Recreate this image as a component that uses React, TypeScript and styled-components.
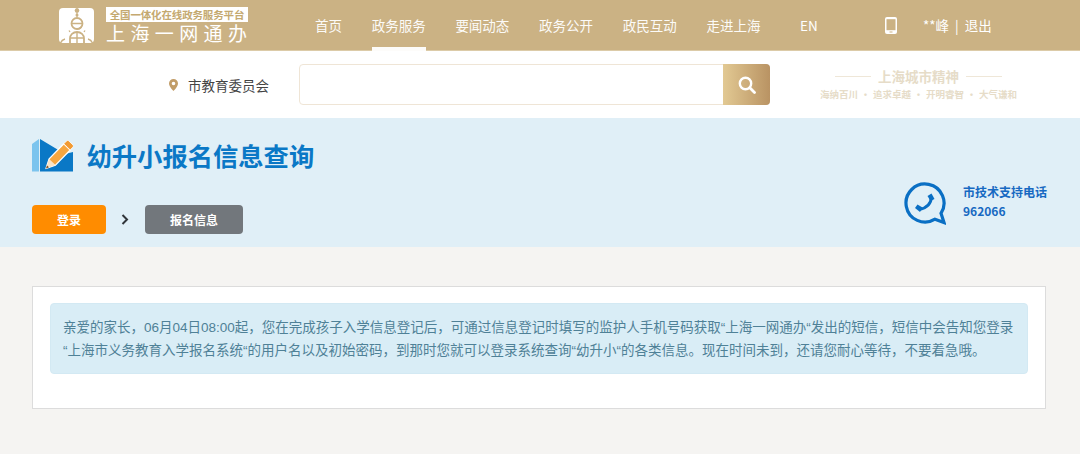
import React from "react";
import styled, { createGlobalStyle } from "styled-components";

const Global = createGlobalStyle`
  html, body { margin: 0; padding: 0; background: #f5f4f2; }
  body { font-family: "Noto Sans CJK SC", "Noto Sans", sans-serif; }
  * { box-sizing: border-box; }
`;

const Page = styled.div`
  width: 1080px;
  height: 454px;
  overflow: hidden;
  background: #f5f4f2;
`;

const Header = styled.header`
  height: 50px;
  background: #cbb284;
  display: flex;
  align-items: center;
  padding-left: 59px;
  border-bottom: 1px solid #dccba8;
  box-sizing: content-box;
`;

const Logo = styled.div`
  display: flex;
  align-items: center;
  gap: 12px;
  width: 256px;
`;

const LogoText = styled.div`
  display: flex;
  flex-direction: column;
  width: 142px;
`;

const Tagline = styled.div`
  height: 15px;
  background: #fff;
  color: #c4a970;
  font-size: 10.5px;
  font-weight: 700;
  line-height: 15px;
  text-align: center;
  white-space: nowrap;
  letter-spacing: -0.15px;
`;

const Brand = styled.div`
  margin-top: 1px;
  color: #fff;
  font-size: 19px;
  line-height: 20px;
  letter-spacing: 5.4px;
  white-space: nowrap;
`;

const Nav = styled.nav`
  display: flex;
  align-self: stretch;
  gap: 29.7px;
`;

const NavItem = styled.a<{ $active?: boolean }>`
  position: relative;
  color: #fff;
  font-size: 13.5px;
  line-height: 50px;
  white-space: nowrap;
  opacity: 0.95;
  ${(p) =>
    p.$active &&
    `&::after { content: ""; position: absolute; left: 0; right: 0; bottom: -1px; height: 4px; background: #fff; }`}
`;

const Lang = styled.span`
  margin-left: 39.5px;
  color: #fff;
  font-size: 13.5px;
  width: 18px;
`;

const Device = styled.span`
  display: flex;
  margin-left: 67px;
`;

const User = styled.span`
  margin-left: 26px;
  color: #fff;
  font-size: 13.5px;
  white-space: pre;
`;

const SearchRow = styled.div`
  height: 67px;
  background: #fff;
  display: flex;
  align-items: center;
  padding-left: 169px;
`;

const Place = styled.div`
  display: flex;
  align-items: center;
  gap: 10px;
  width: 130px;
  color: #444;
  font-size: 13.5px;
`;

const SearchBox = styled.div`
  width: 471px;
  height: 41px;
  display: flex;
  border: 1px solid #efe5d6;
  border-radius: 4px;
  background: #fff;
`;

const SearchInput = styled.div`
  flex: 1;
`;

const SearchButton = styled.div`
  width: 47px;
  height: 41px;
  margin: -1px -1px 0 0;
  border-radius: 0 4px 4px 0;
  background: linear-gradient(90deg, #e2c993, #b99363);
  display: flex;
  align-items: center;
  justify-content: center;
`;

const Spirit = styled.div`
  margin-left: 50px;
  width: 197px;
  color: #e6dcc8;
  display: flex;
  flex-direction: column;
  align-items: center;
`;

const SpiritTitle = styled.div`
  display: flex;
  align-items: center;
  gap: 7px;
  font-size: 13.5px;
  font-weight: 700;
  line-height: 20px;
  &::before, &::after {
    content: "";
    width: 36px;
    height: 1px;
    background: #efe7d8;
  }
`;

const SpiritSub = styled.div`
  font-size: 9.5px;
  font-weight: 700;
  line-height: 17px;
  word-spacing: 0.6px;
  white-space: nowrap;
`;

const Banner = styled.section`
  height: 129px;
  background: #e0eff7;
  display: flex;
  justify-content: space-between;
  padding: 19px 33px 0 32px;
`;

const BannerLeft = styled.div`
  display: flex;
  flex-direction: column;
`;

const TitleRow = styled.div`
  display: flex;
  align-items: center;
  gap: 14px;
  height: 36px;
`;

const Title = styled.h1`
  margin: -1px 0 0 -0.5px;
  color: #0a78c6;
  font-size: 25.3px;
  font-weight: 700;
  line-height: 36px;
  white-space: nowrap;
`;

const Steps = styled.div`
  display: flex;
  align-items: center;
  margin-top: 32px;
`;

const Step = styled.div<{ $bg: string; $w: number }>`
  width: ${(p) => p.$w}px;
  height: 29px;
  border-radius: 4px;
  background: ${(p) => p.$bg};
  color: #fff;
  font-size: 12px;
  font-weight: 700;
  line-height: 29px;
  text-align: center;
`;

const Arrow = styled.span`
  display: flex;
  justify-content: center;
  width: 38px;
  margin-right: 1px;
`;

const Support = styled.div`
  display: flex;
  align-items: flex-start;
  gap: 17px;
  margin-top: 44px;
`;

const SupportText = styled.div`
  color: #1769c2;
  font-size: 12px;
  font-weight: 700;
  line-height: 19px;
  white-space: nowrap;
  padding-top: 1px;
`;

const Main = styled.main`
  padding: 39px 34px 0 32px;
`;

const Card = styled.div`
  height: 123px;
  background: #fff;
  border: 1px solid #dcdcdc;
  padding: 16px 17px;
`;

const Alert = styled.div`
  height: 71px;
  background: #d9edf6;
  border: 1px solid #d3e9f3;
  border-radius: 4px;
  padding: 12px 12px;
  color: #4f8197;
  font-family: "Liberation Sans", "Noto Sans CJK SC", sans-serif;
  font-size: 13.5px;
  line-height: 23px;
  white-space: nowrap;
`;

const LogoIcon = () => (
  <svg width="35" height="35" viewBox="0 0 35 35">
    <rect width="35" height="35" rx="4" fill="#fff" />
    <g fill="none" stroke="#cbb284">
      <path d="M18 0v9" strokeWidth="1.2" />
      <circle cx="18" cy="15.500" r="5.500" strokeWidth="1.800" />
      <path d="M13 15.500h10M22.500 19c-1 1.500-2.800 2-4.500 2" strokeWidth="1.500" />
      <path d="M11 24l-1-1.500M25 24l1-1.500" strokeWidth="1.300" />
      <path d="M11 35v-4.500c0-3.800 3-6.500 7-6.500s7 2.700 7 6.500V35" strokeWidth="1.800" />
      <path d="M18 24v11M11 30h14" strokeWidth="1.400" />
      <path d="M1.500 35c.8-2 2.500-3.500 4.500-4M33.500 35c-.8-2-2.500-3.500-4.500-4" strokeWidth="1.400" />
    </g>
    <circle cx="18" cy="2.500" r="2.300" fill="#cbb284" />
    <circle cx="18" cy="7" r="1.500" fill="#cbb284" />
  </svg>
);

const PhoneIcon = () => (
  <svg width="12" height="17" viewBox="0 0 12 17">
    <rect x="0" y="0" width="12" height="17" rx="2" fill="#fff" />
    <rect x="1.500" y="2.200" width="9" height="11" fill="#cbb284" />
    <rect x="4.500" y="14.500" width="3" height="1" fill="#cbb284" />
  </svg>
);

const PinIcon = () => (
  <svg width="9" height="12" viewBox="0 0 9 12">
    <path
      fillRule="evenodd"
      d="M4.500 0A4.500 4.500 0 0 0 0 4.500C0 7.500 4.500 12 4.500 12S9 7.500 9 4.500A4.500 4.500 0 0 0 4.500 0Zm0 2.700a1.800 1.800 0 1 1 0 3.600 1.800 1.800 0 0 1 0-3.600Z"
      fill="#c29d68"
    />
  </svg>
);

const SearchIcon = () => (
  <svg width="18" height="18" viewBox="0 0 18 18">
    <circle cx="7.500" cy="7.500" r="5.700" fill="none" stroke="#fff" strokeWidth="2.400" />
    <path d="M11.800 11.800L16.500 16.500" stroke="#fff" strokeWidth="2.800" strokeLinecap="round" />
  </svg>
);

const FormIcon = () => (
  <svg width="41" height="33" viewBox="0 0 41 33">
    <path d="M0 5L7 0V32.500H0Z" fill="#7cc4ee" />
    <path d="M8 0L33 15L41 13V32.500H8Z" fill="#0a78c6" />
    <path d="M14 29.500L17.100 19.900L31.800 4.800L38.200 11L23.500 26.100Z" fill="#f7a63f" stroke="#fff" strokeWidth="1.300" strokeLinejoin="round" />
    <path d="M14 29.500L17.100 19.900L23.500 26.100Z" fill="#fbe4c6" />
    <path d="M14 29.500L15 26.400L17 28.300Z" fill="#7a4a20" />
    <path d="M31.800 4.800L34.600 1.900C35.200 1.300 36.200 1.300 36.800 1.900L41 6C41.500 6.600 41.500 7.500 41 8.100L38.200 11Z" fill="#f29a33" stroke="#fff" strokeWidth="0.800" />
  </svg>
);

const ChevronIcon = () => (
  <svg width="8" height="11" viewBox="0 0 8 11">
    <path d="M1.500 1L6 5.500L1.500 10" fill="none" stroke="#30353a" strokeWidth="2" />
  </svg>
);

const ChatPhoneIcon = () => (
  <svg width="42" height="44" viewBox="0 0 42 44">
    <path
      d="M31 38.200A19 19 0 1 1 37 32.300L40 41.500Z"
      fill="none"
      stroke="#0a6fc4"
      strokeWidth="3.200"
      strokeLinejoin="miter"
    />
    <path d="M27.500 15.500Q27 26 15.500 28.500" fill="none" stroke="#0a6fc4" strokeWidth="3" />
    <path d="M23.500 15L27.500 12.500L30.500 18L26.500 20Z" fill="#0a6fc4" />
    <path d="M11 27L13.500 23.500L18.500 26.500L16 31Z" fill="#0a6fc4" />
  </svg>
);

const navItems = ["首页", "政务服务", "要闻动态", "政务公开", "政民互动", "走进上海"];

export default function App() {
  return (
    <Page>
      <Global />
      <Header>
        <Logo>
          <LogoIcon />
          <LogoText>
            <Tagline>全国一体化在线政务服务平台</Tagline>
            <Brand>上海一网通办</Brand>
          </LogoText>
        </Logo>
        <Nav>
          {navItems.map((item) => (
            <NavItem key={item} $active={item === "政务服务"}>
              {item}
            </NavItem>
          ))}
        </Nav>
        <Lang>EN</Lang>
        <Device>
          <PhoneIcon />
        </Device>
        <User>**峰  |  退出</User>
      </Header>
      <SearchRow>
        <Place>
          <PinIcon />
          市教育委员会
        </Place>
        <SearchBox>
          <SearchInput />
          <SearchButton>
            <SearchIcon />
          </SearchButton>
        </SearchBox>
        <Spirit>
          <SpiritTitle>上海城市精神</SpiritTitle>
          <SpiritSub>海纳百川 · 追求卓越 · 开明睿智 · 大气谦和</SpiritSub>
        </Spirit>
      </SearchRow>
      <Banner>
        <BannerLeft>
          <TitleRow>
            <FormIcon />
            <Title>幼升小报名信息查询</Title>
          </TitleRow>
          <Steps>
            <Step $bg="#ff8c00" $w={74}>登录</Step>
            <Arrow>
              <ChevronIcon />
            </Arrow>
            <Step $bg="#72777c" $w={98}>报名信息</Step>
          </Steps>
        </BannerLeft>
        <Support>
          <ChatPhoneIcon />
          <SupportText>
            市技术支持电话
            <br />
            962066
          </SupportText>
        </Support>
      </Banner>
      <Main>
        <Card>
          <Alert>
            亲爱的家长，06月04日08:00起，您在完成孩子入学信息登记后，可通过信息登记时填写的监护人手机号码获取“上海一网通办“发出的短信，短信中会告知您登录
            <br />
            “上海市义务教育入学报名系统“的用户名以及初始密码，到那时您就可以登录系统查询“幼升小“的各类信息。现在时间未到，还请您耐心等待，不要着急哦。
          </Alert>
        </Card>
      </Main>
    </Page>
  );
}
